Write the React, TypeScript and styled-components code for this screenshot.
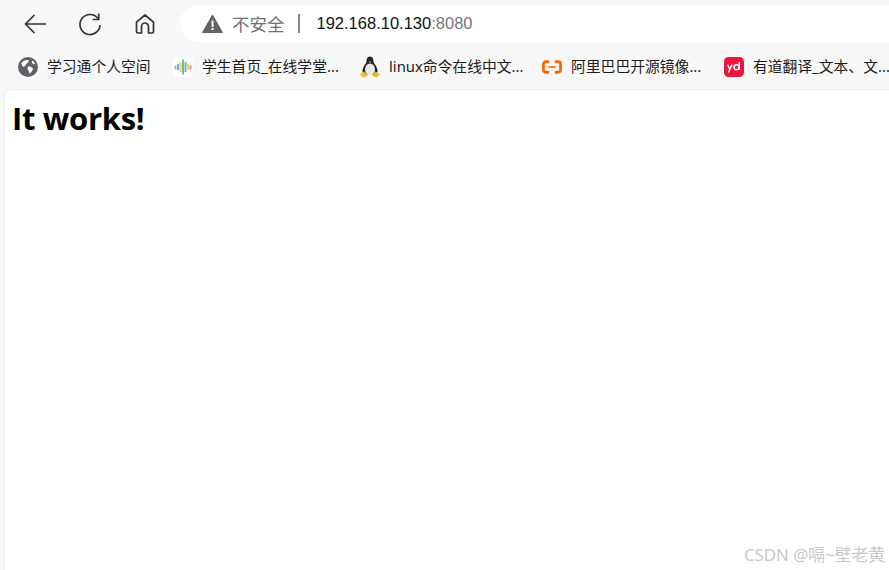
import React, { FC, ReactNode } from 'react';
import styled, { createGlobalStyle } from 'styled-components';

const GlobalStyle = createGlobalStyle`
    html, body {
        margin: 0;
        padding: 0;
        height: 100%;
        overflow: hidden;
        background: #f7f7f7;
    }
    #root {
        height: 100%;
    }
`;

const CJK = `"Noto Sans", "Noto Sans CJK SC", sans-serif`;

const Browser = styled.div`
    width: 889px;
    height: 570px;
    display: flex;
    flex-direction: column;
    background: #f7f7f7;
    overflow: hidden;
    font-family: ${CJK};
`;

const Toolbar = styled.div`
    height: 48px;
    flex: none;
    display: flex;
    align-items: center;
    padding: 0 0 0 23px;
`;

const NavButton = styled.div<{ $width: number }>`
    width: ${p => p.$width}px;
    height: 30px;
    flex: none;
    display: flex;
    align-items: center;
`;

const Omnibox = styled.div`
    flex: 1;
    height: 37px;
    margin-top: -1px;
    margin-right: -40px;
    padding-left: 22px;
    display: flex;
    align-items: center;
    background: #fff;
    border-radius: 19px;
`;

const Insecure = styled.span`
    margin-left: 9px;
    font-size: 17.5px;
    color: #6f6f6f;
`;

const Divider = styled.span`
    width: 2px;
    height: 19px;
    margin: 0 17px 0 13px;
    background: #8a8a8a;
`;

const Host = styled.span`
    font-family: "Liberation Sans", Arial, sans-serif;
    font-size: 16.5px;
    color: #111;
`;

const Port = styled(Host)`
    color: #767676;
`;

const BookmarkBar = styled.div`
    box-sizing: border-box;
    height: 40px;
    flex: none;
    display: flex;
    align-items: center;
    padding: 0 0 2px 18px;
    white-space: nowrap;
`;

const Bookmark = styled.div<{ $width: number }>`
    width: ${p => p.$width}px;
    flex: none;
    display: flex;
    align-items: center;
    gap: 9px;
`;

const BookmarkIcon = styled.div`
    width: 20px;
    height: 20px;
    flex: none;
    display: flex;
    align-items: center;
    justify-content: center;
`;

const BookmarkLabel = styled.span`
    padding-bottom: 2px;
    font-size: 14.8px;
    line-height: 20px;
    color: #1c1c1c;
`;

const Viewport = styled.div`
    flex: 1;
    position: relative;
    margin: 2px 0 0 5px;
    padding: 8px 8px 8px 7px;
    background: #fff;
    border-radius: 8px 0 0 0;
    box-shadow: 0 0 0 1px #ededed;
`;

const Heading = styled.h1`
    margin: 0;
    font-family: "Open Sans", sans-serif;
    font-size: 31px;
    line-height: 41px;
    font-weight: 700;
    color: #000;
    letter-spacing: -0.3px;
`;

const Watermark = styled.div`
    position: absolute;
    right: 4px;
    bottom: 4px;
    font-size: 16.8px;
    line-height: 22px;
    color: #c9c9c9;
    white-space: nowrap;
`;

const BackIcon: FC = () => (
    <svg width="24" height="24" viewBox="0 0 24 24" fill="none" stroke="#333" strokeWidth="1.7">
        <path d="M23 12H2.500M11.500 3L2.500 12l9 9" />
    </svg>
);

const ReloadIcon: FC = () => (
    <svg width="24" height="24" viewBox="0 0 24 24" fill="none" stroke="#333" strokeWidth="1.7">
        <path d="M20 6.500A10 10 0 1 0 22 13" />
        <path d="M20.700 1.500v6h-6" />
    </svg>
);

const HomeIcon: FC = () => (
    <svg width="22" height="22" viewBox="0 0 22 22" fill="none" stroke="#333" strokeWidth="1.7" strokeLinejoin="round">
        <path d="M2.500 9.200L11 2l8.500 7.200V18.500a1.500 1.500 0 0 1-1.500 1.500h-3.500v-6.500a3.500 3.500 0 0 0-7 0V20H4a1.500 1.500 0 0 1-1.500-1.500z" />
    </svg>
);

const WarningIcon: FC = () => (
    <svg width="21" height="19" viewBox="0 0 21 19">
        <path d="M10.500 1L20.500 18.500H.5z" fill="#646464" stroke="#646464" strokeWidth="1" strokeLinejoin="round" />
        <rect x="9.600" y="6.500" width="1.900" height="6.500" fill="#fff" />
        <rect x="9.600" y="14" width="1.900" height="2" fill="#fff" />
    </svg>
);

const GlobeIcon: FC = () => (
    <svg width="20" height="20" viewBox="0 0 20 20">
        <circle cx="10" cy="10" r="10" fill="#5f6368" />
        <path d="M3 6.500C5 3.500 8 2.500 10.500 3c.5 1.500-.5 3-2 3.500-.5 2-2 2-2.500 3.500-1.500-.5-2-2-3-3.500z" fill="#fff" />
        <path d="M10 9.500c2 0 4.500.5 5 2.500-.5 2-2 3-3 4.500-1-.5-1-2-1.500-3-1-1-1.500-2.500-.5-4z" fill="#fff" />
        <path d="M14 3.500c1.500.8 2.500 2 3 3.500-1 .5-2 0-3-1z" fill="#fff" />
    </svg>
);

const BarsIcon: FC = () => (
    <svg width="20" height="20" viewBox="0 0 20 20">
        <rect width="20" height="20" rx="4" fill="#fff" />
        <rect x="1.500" y="8.500" width="2" height="4" fill="#8cc98a" />
        <rect x="4" y="7" width="2" height="6" fill="#6ab0ee" />
        <rect x="6.500" y="5" width="2" height="10" fill="#f3cf68" />
        <rect x="9" y="2.500" width="2" height="15" fill="#6fc07a" />
        <rect x="11.500" y="5" width="2" height="10" fill="#6ab0ee" />
        <rect x="14" y="7" width="2" height="6" fill="#f3cf68" />
        <rect x="16.500" y="8.500" width="2" height="4" fill="#ee8a80" />
    </svg>
);

const PenguinIcon: FC = () => (
    <svg width="20" height="22" viewBox="0 0 20 22">
        <path d="M10 .5c3 0 3.500 3 3.500 5 0 2 4 5 4 9.500 0 2-1 3-2 3.500H4.500C3.500 18 2.500 17 2.500 15c0-4.500 4-7.500 4-9.500 0-2 .5-5 3.500-5z" fill="#222" />
        <ellipse cx="10" cy="13.500" rx="5" ry="6" fill="#e9e9e5" />
        <path d="M8.500 5.500h3L10 7.200z" fill="#f2b01e" />
        <path d="M0 18.500l4.500-3 3 4.500-4 1.500zM20 18.500l-4.500-3-3 4.500 4 1.500z" fill="#f5bd17" />
    </svg>
);

const AliyunIcon: FC = () => (
    <svg width="21" height="14" viewBox="0 0 21 14" fill="none" stroke="#ff6a00" strokeWidth="3">
        <path d="M7.500 1.500H4a2.500 2.500 0 0 0-2.500 2.500v6A2.500 2.500 0 0 0 4 12.500h3.500" />
        <path d="M13.500 1.500H17A2.500 2.500 0 0 1 19.500 4v6a2.500 2.500 0 0 1-2.500 2.500h-3.500" />
        <path d="M7 7h7" strokeWidth="1.800" />
    </svg>
);

const YoudaoIcon: FC = () => (
    <svg width="20" height="20" viewBox="0 0 20 20">
        <rect width="20" height="20" rx="4.500" fill="#f0163a" />
        <path d="M3.500 7.500l2.300 5 2.200-5M5.800 12.500L4.500 15.500" fill="none" stroke="#fff" strokeWidth="1.500" />
        <circle cx="12.500" cy="10.300" r="2.500" fill="none" stroke="#fff" strokeWidth="1.500" />
        <path d="M15.200 5v8" stroke="#fff" strokeWidth="1.500" />
    </svg>
);

const bookmarks: { icon: ReactNode; label: string; width: number }[] = [
    { icon: <GlobeIcon />, label: '学习通个人空间', width: 155 },
    { icon: <BarsIcon />, label: '学生首页_在线学堂...', width: 187 },
    { icon: <PenguinIcon />, label: 'linux命令在线中文...', width: 182 },
    { icon: <AliyunIcon />, label: '阿里巴巴开源镜像...', width: 182 },
    { icon: <YoudaoIcon />, label: '有道翻译_文本、文...', width: 165 },
];

const App: FC = () => {
    return (
        <Browser>
            <GlobalStyle />
            <Toolbar>
                <NavButton $width={55}><BackIcon /></NavButton>
                <NavButton $width={56}><ReloadIcon /></NavButton>
                <NavButton $width={46}><HomeIcon /></NavButton>
                <Omnibox>
                    <WarningIcon />
                    <Insecure>不安全</Insecure>
                    <Divider />
                    <Host>192.168.10.130</Host>
                    <Port as="span">:8080</Port>
                </Omnibox>
            </Toolbar>
            <BookmarkBar>
                {bookmarks.map(b => (
                    <Bookmark key={b.label} $width={b.width}>
                        <BookmarkIcon>{b.icon}</BookmarkIcon>
                        <BookmarkLabel>{b.label}</BookmarkLabel>
                    </Bookmark>
                ))}
            </BookmarkBar>
            <Viewport>
                <Heading>It works!</Heading>
                <Watermark>CSDN @嗝~壁老黄</Watermark>
            </Viewport>
        </Browser>
    );
};

export default App;
